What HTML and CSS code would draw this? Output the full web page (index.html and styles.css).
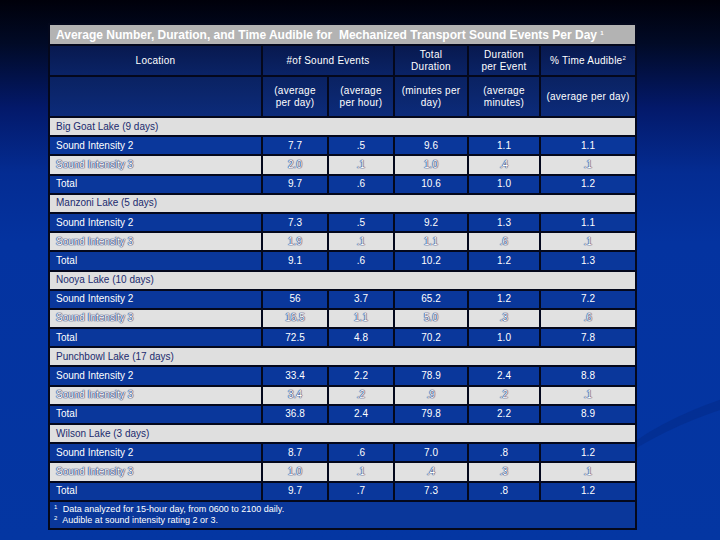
FILE: index.html
```html
<!DOCTYPE html>
<html>
<head>
<meta charset="utf-8">
<link rel="stylesheet" href="styles.css">
</head>
<body>
<div class="slide">
<table class="data">
  <colgroup>
    <col class="c1"><col class="c2"><col class="c3"><col class="c4"><col class="c5"><col class="c6">
  </colgroup>
  <tr class="title"><td colspan="6">Average Number, Duration, and Time Audible for&nbsp; Mechanized Transport Sound Events Per Day <sup>1</sup></td></tr>
  <tr class="head1">
    <td>Location</td>
    <td colspan="2">#of Sound Events</td>
    <td>Total<br>Duration</td>
    <td>Duration<br>per Event</td>
    <td>% Time Audible<sup>2</sup></td>
  </tr>
  <tr class="head2">
    <td></td>
    <td>(average<br>per day)</td>
    <td>(average<br>per hour)</td>
    <td>(minutes per<br>day)</td>
    <td>(average<br>minutes)</td>
    <td>(average per day)</td>
  </tr>

  <tr class="sect"><td colspan="6">Big Goat Lake (9 days)</td></tr>
  <tr class="blue"><td>Sound Intensity 2</td><td>7.7</td><td>.5</td><td>9.6</td><td>1.1</td><td>1.1</td></tr>
  <tr class="grey"><td>Sound Intensity 3</td><td>2.0</td><td>.1</td><td>1.0</td><td>.4</td><td>.1</td></tr>
  <tr class="blue"><td>Total</td><td>9.7</td><td>.6</td><td>10.6</td><td>1.0</td><td>1.2</td></tr>

  <tr class="sect"><td colspan="6">Manzoni Lake (5 days)</td></tr>
  <tr class="blue"><td>Sound Intensity 2</td><td>7.3</td><td>.5</td><td>9.2</td><td>1.3</td><td>1.1</td></tr>
  <tr class="grey"><td>Sound Intensity 3</td><td>1.9</td><td>.1</td><td>1.1</td><td>.6</td><td>.1</td></tr>
  <tr class="blue"><td>Total</td><td>9.1</td><td>.6</td><td>10.2</td><td>1.2</td><td>1.3</td></tr>

  <tr class="sect"><td colspan="6">Nooya Lake (10 days)</td></tr>
  <tr class="blue"><td>Sound Intensity 2</td><td>56</td><td>3.7</td><td>65.2</td><td>1.2</td><td>7.2</td></tr>
  <tr class="grey"><td>Sound Intensity 3</td><td>16.5</td><td>1.1</td><td>5.0</td><td>.3</td><td>.6</td></tr>
  <tr class="blue"><td>Total</td><td>72.5</td><td>4.8</td><td>70.2</td><td>1.0</td><td>7.8</td></tr>

  <tr class="sect"><td colspan="6">Punchbowl Lake (17 days)</td></tr>
  <tr class="blue"><td>Sound Intensity 2</td><td>33.4</td><td>2.2</td><td>78.9</td><td>2.4</td><td>8.8</td></tr>
  <tr class="grey"><td>Sound Intensity 3</td><td>3.4</td><td>.2</td><td>.9</td><td>.2</td><td>.1</td></tr>
  <tr class="blue"><td>Total</td><td>36.8</td><td>2.4</td><td>79.8</td><td>2.2</td><td>8.9</td></tr>

  <tr class="sect"><td colspan="6">Wilson Lake (3 days)</td></tr>
  <tr class="blue"><td>Sound Intensity 2</td><td>8.7</td><td>.6</td><td>7.0</td><td>.8</td><td>1.2</td></tr>
  <tr class="grey"><td>Sound Intensity 3</td><td>1.0</td><td>.1</td><td>.4</td><td>.3</td><td>.1</td></tr>
  <tr class="blue"><td>Total</td><td>9.7</td><td>.7</td><td>7.3</td><td>.8</td><td>1.2</td></tr>

  <tr class="foot"><td colspan="6">
    <div class="note"><sup>1</sup> Data analyzed for 15-hour day, from 0600 to 2100 daily.</div>
    <div class="note"><sup>2</sup> Audible at sound intensity rating 2 or 3.</div>
  </td></tr>
</table>
</div>
</body>
</html>
```
FILE: styles.css
```css
html, body {
  margin: 0;
  padding: 0;
}
body {
  width: 720px;
  height: 540px;
  overflow: hidden;
  font-family: "Liberation Sans", Arial, sans-serif;
  background: linear-gradient(to bottom, #00000a 0%, #010a26 8%, #03196a 20%, #042c92 32%, #0433a0 45%, #0436a2 100%);
}
.slide {
  position: relative;
  width: 720px;
  height: 540px;
  overflow: hidden;
  padding-top: 23px;
  padding-left: 48px;
  box-sizing: border-box;
}
.slide::after {
  content: "";
  position: absolute;
  left: 590px;
  top: 385px;
  width: 380px;
  height: 130px;
  border-radius: 50%;
  border-top: 10px solid rgba(0, 20, 90, 0.18);
  transform: rotate(-14deg);
  pointer-events: none;
}
table.data {
  position: relative;
  z-index: 1;
  border-collapse: separate;
  border-spacing: 2px;
  background: #04081c;
  table-layout: fixed;
  width: 589px;
  color: #ffffff;
  font-size: 10px;
}
.c1 { width: 211px; }
.c2 { width: 64px; }
.c3 { width: 64px; }
.c4 { width: 72px; }
.c5 { width: 70px; }
.c6 { width: 94px; }
td {
  padding: 0;
  text-align: center;
  vertical-align: middle;
  line-height: 12px;
}
sup {
  font-size: 6px;
  line-height: 0;
  vertical-align: 4px;
}
.title td {
  height: 19px;
  background: #b3b3b3;
  text-align: left;
  padding-left: 6px;
  font-weight: bold;
  font-size: 12px;
  white-space: nowrap;
}
.head1 td, .head2 td {
  letter-spacing: 0.25px;
}
.head1 td {
  height: 29px;
  background: linear-gradient(to bottom, #08194f, #0a2366);
}
.head2 td {
  height: 39px;
  background: linear-gradient(to bottom, #0a2262, #0c2b7a);
}
.sect td {
  height: 17.2px;
  background: #dfdfdf;
  color: #1b2b6e;
  text-align: left;
  padding-left: 6px;
}
.blue td {
  height: 17.2px;
  background: #0a379b;
}
.grey td {
  height: 17.2px;
  background: #e1e1e1;
  color: #ffffff;
  text-shadow: 0 0 1px #1b2b6e, 0 0 1px #1b2b6e, 0 0 1px #1b2b6e;
}
.blue td:first-child, .grey td:first-child {
  text-align: left;
  padding-left: 6px;
}
.foot td {
  height: 26px;
  background: #0a379b;
  text-align: left;
  padding-left: 4px;
  font-size: 9px;
  vertical-align: middle;
}
.note {
  line-height: 11px;
}
.note sup {
  font-size: 6px;
  vertical-align: 3px;
  margin-right: 3px;
}
```
